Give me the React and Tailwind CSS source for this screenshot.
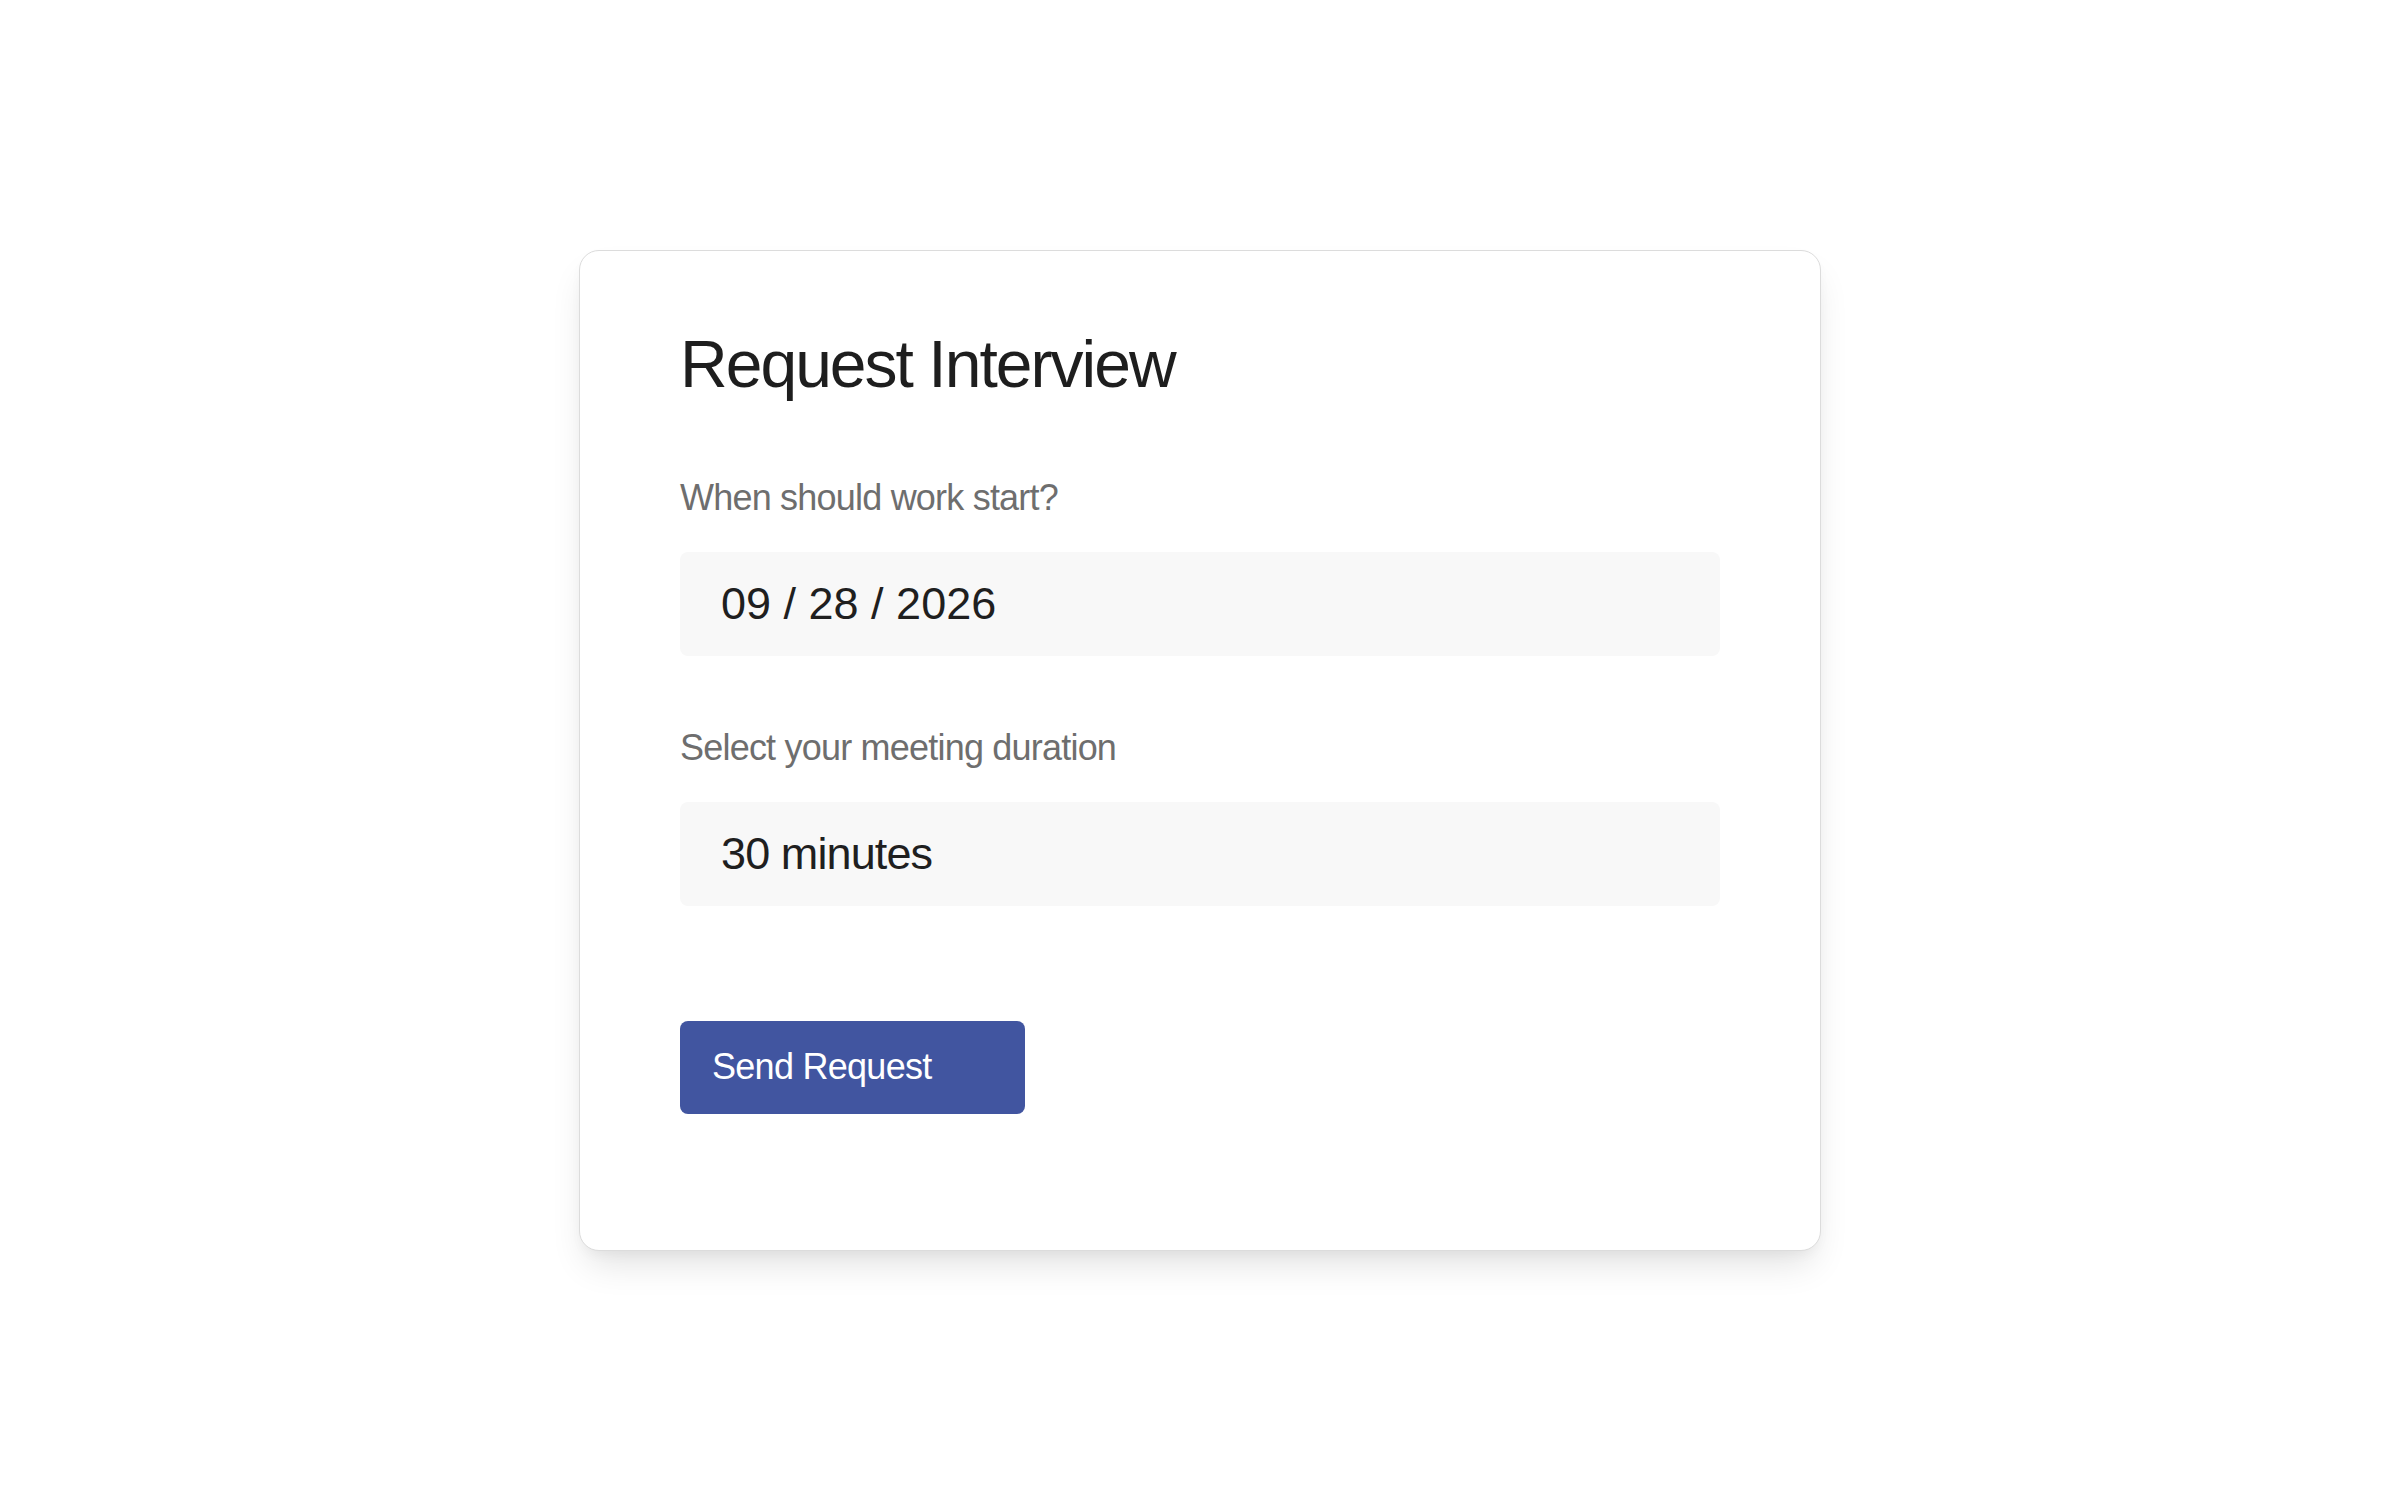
import React from 'react';

const Field = ({ label, value, first, valueTracking }) => {
  return (
    <div className={first ? 'mt-[83px]' : 'mt-[74px]'}>
      <label className="block text-[36px] leading-[36px] tracking-[-0.022em] text-[#6e6e6e]">
        {label}
      </label>
      <div className="mt-[36px] h-[104px] rounded-[8px] bg-[#f8f8f8] pl-[41px] flex items-center">
        <span className={`text-[45px] leading-[45px] text-[#1f1f1f] ${valueTracking}`}>{value}</span>
      </div>
    </div>
  );
};

export default function App() {
  return (
    <div
      className="min-h-screen w-full bg-white flex items-center justify-center"
      style={{ fontFamily: '"Liberation Sans", Arial, sans-serif' }}
    >
      <div className="w-[1242px] rounded-[20px] border border-[#dcdcdc] bg-white px-[100px] pt-[80px] pb-[136px] shadow-[0_20px_36px_-8px_rgba(0,0,0,0.12),0_6px_14px_-4px_rgba(0,0,0,0.05)]">
        <h1 className="text-[66px] leading-[66px] tracking-[-0.03em] text-[#1e1e1e] font-normal">
          Request Interview
        </h1>

        <Field first label="When should work start?" value="09 / 28 / 2026" valueTracking="tracking-[0em]" />
        <Field label="Select your meeting duration" value="30 minutes" valueTracking="tracking-[-0.02em]" />

        {/* Submit */}
        <button className="mt-[115px] w-[345px] h-[93px] rounded-[8px] bg-[#4155a0] pl-[32px] text-left text-[36px] leading-[36px] tracking-[-0.02em] text-white">
          Send Request
        </button>
      </div>
    </div>
  );
}
